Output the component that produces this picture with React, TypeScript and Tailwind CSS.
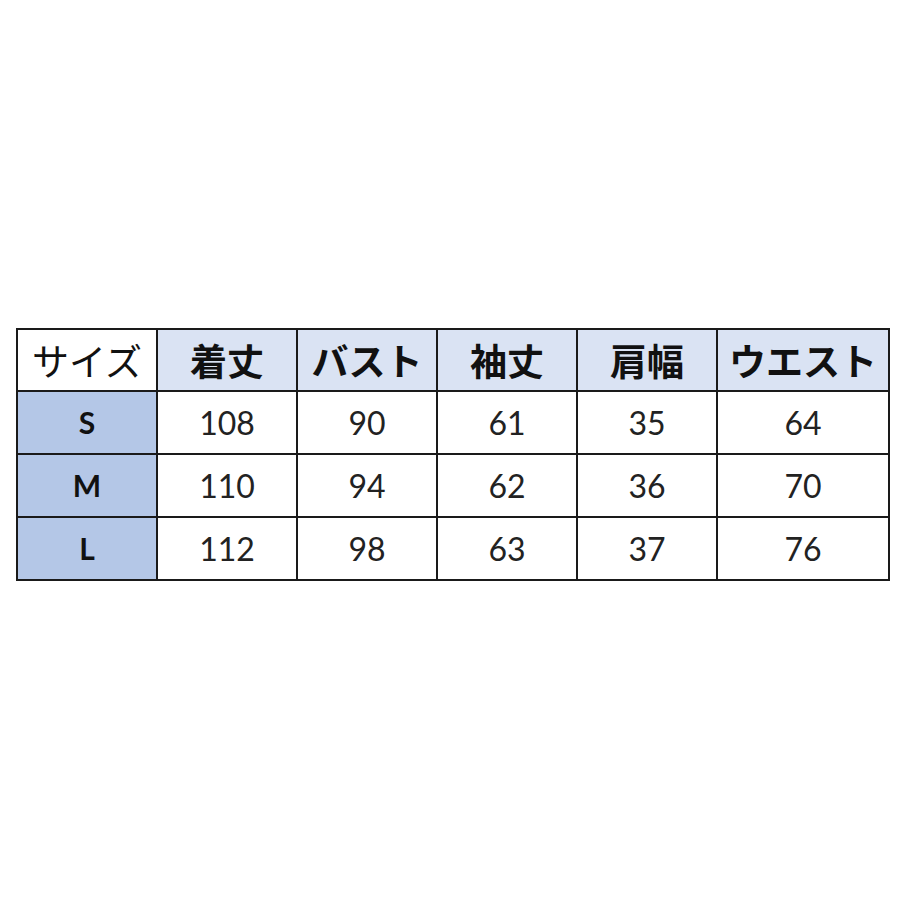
import React from 'react';

const headers = ['着丈', 'バスト', '袖丈', '肩幅', 'ウエスト'];

const rows = [
  { size: 'S', values: ['108', '90', '61', '35', '64'] },
  { size: 'M', values: ['110', '94', '62', '36', '70'] },
  { size: 'L', values: ['112', '98', '63', '37', '76'] },
];

export default function App() {
  return (
    <div className="w-[900px] h-[900px] bg-white pt-[328px] pl-[16px]">
      <table className="border-collapse border-2 border-[#1a1a1a] table-fixed w-[872px]">
        <colgroup>
          <col className="w-[140px]" />
          <col className="w-[140px]" />
          <col className="w-[140px]" />
          <col className="w-[140px]" />
          <col className="w-[140px]" />
          <col className="w-[172px]" />
        </colgroup>
        <thead>
          <tr className="h-[62px]">
            <th className="border-2 border-[#1a1a1a] bg-white font-normal text-[37px] text-[#111] font-['Noto_Sans_CJK_JP',sans-serif] leading-none">
              サイズ
            </th>
            {headers.map((h) => (
              <th
                key={h}
                className="border-2 border-[#1a1a1a] bg-[#dae3f3] font-bold text-[37px] text-[#111] font-['Noto_Sans_CJK_JP',sans-serif] leading-none"
              >
                {h}
              </th>
            ))}
          </tr>
        </thead>
        <tbody>
          {rows.map((r) => (
            <tr key={r.size} className="h-[63px]">
              <td className="border-2 border-[#1a1a1a] bg-[#b4c7e7] text-center font-bold text-[30px] text-[#111] font-['Lato',sans-serif]">
                {r.size}
              </td>
              {r.values.map((v, i) => (
                <td
                  key={i}
                  className="border-2 border-[#1a1a1a] bg-white text-center text-[32px] text-[#222] font-['Lato',sans-serif]"
                >
                  {v}
                </td>
              ))}
            </tr>
          ))}
        </tbody>
      </table>
    </div>
  );
}
